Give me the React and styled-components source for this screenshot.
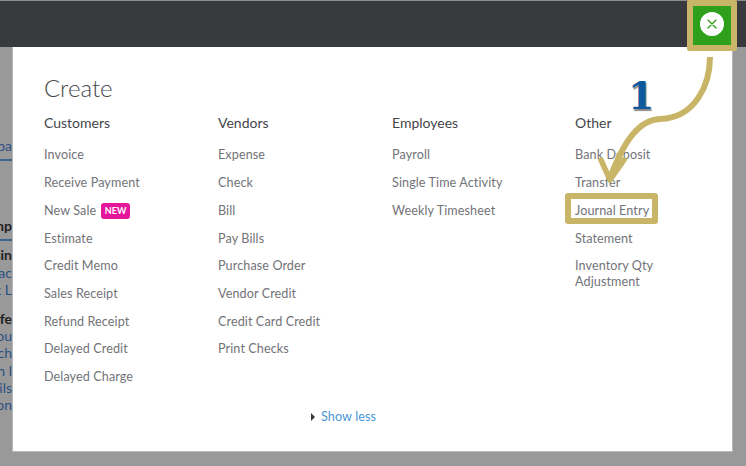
import styled, { createGlobalStyle } from "styled-components"

const GOLD = "#c9b568"

const Global = createGlobalStyle`
  html, body {
    margin: 0;
    padding: 0;
    background: #999999;
  }
  #root {
    width: 746px;
    height: 466px;
    overflow: hidden;
  }
`

const Page = styled.div`
  position: relative;
  width: 746px;
  height: 466px;
  display: flex;
  flex-direction: column;
  background: #999999;
  font-family: Lato, "Open Sans", sans-serif;
  overflow: hidden;
`

const TopBar = styled.div`
  height: 47px;
  flex: none;
  background: #393a3d;
  border-top: 1px solid #8d8d8d;
  box-sizing: border-box;
`

const Body = styled.div`
  display: flex;
  align-items: flex-start;
`

const Behind = styled.div`
  width: 12px;
  height: 405px;
  flex: none;
  overflow: hidden;
  font-size: 14px;
  line-height: 17.2px;
  color: #2d4f83;
  direction: rtl;
  white-space: nowrap;
`

const BehindGroup = styled.div`
  margin-top: ${(p) => p.$top}px;
`

const BehindTitle = styled.div`
  font-weight: 700;
  color: #222222;
`

const BehindLine = styled.div`
  height: 2px;
  margin-top: 5px;
  background: #3c648f;
`

const Modal = styled.div`
  width: 721px;
  height: 405px;
  flex: none;
  box-sizing: border-box;
  padding: 27px 0 0 31px;
  background: #ffffff;
  border-left: 1px solid #b5b8bd;
  border-right: 1px solid #b5b8bd;
  border-bottom: 1px solid #b5b8bd;
  display: flex;
  flex-direction: column;
`

const Title = styled.h1`
  margin: 0;
  font-size: 24px;
  line-height: 28px;
  font-weight: 300;
  color: #45464a;
`

const Columns = styled.div`
  display: flex;
  margin-top: 11px;
`

const Column = styled.div`
  width: ${(p) => p.$width}px;
  flex: none;
`

const Heading = styled.h2`
  margin: 0 0 8.6px;
  font-size: 14px;
  line-height: 20px;
  font-weight: 400;
  color: #45464a;
`

const Item = styled.div`
  display: flex;
  align-items: center;
  gap: 5px;
  padding: 5.85px 0;
  font-size: 12.6px;
  line-height: 16px;
  letter-spacing: 0.1px;
  color: #727378;
`

const NewTag = styled.span`
  padding: 0 3.5px;
  height: 16px;
  line-height: 16px;
  border-radius: 3px;
  background: #e5159c;
  color: #ffffff;
  font-size: 9px;
  font-weight: 700;
  letter-spacing: 0;
`

const ShowLess = styled.div`
  position: absolute;
  left: 311px;
  top: 408px;
  display: flex;
  align-items: center;
  gap: 6px;
  font-size: 12.6px;
  line-height: 16px;
  letter-spacing: 0.1px;
  color: #4a96d8;
  padding-top: 1px;
`

const Caret = styled.span`
  width: 0;
  height: 0;
  border-top: 4px solid transparent;
  border-bottom: 4px solid transparent;
  border-left: 4px solid #393a3d;
`

const CloseFrame = styled.div`
  position: absolute;
  left: 687px;
  top: 0;
  width: 50px;
  height: 51px;
  box-sizing: border-box;
  border: 6px solid ${GOLD};
  border-radius: 2px;
  background: #2ea01c;
  display: flex;
  align-items: center;
  justify-content: center;
`

const CloseCircle = styled.div`
  width: 24px;
  height: 24px;
  border-radius: 50%;
  background: #ffffff;
  display: flex;
  align-items: center;
  justify-content: center;
  margin-top: -3px;
`

const Highlight = styled.div`
  position: absolute;
  left: 565px;
  top: 193px;
  width: 93px;
  height: 31px;
  box-sizing: border-box;
  border: 6px solid ${GOLD};
  border-radius: 3px;
`

const StepNumber = styled.div`
  position: absolute;
  left: 628px;
  top: 74px;
  font-family: "DejaVu Serif", serif;
  font-weight: 700;
  font-size: 38px;
  line-height: 44px;
  color: #0f5a9e;
  text-shadow: 1px 2px 1px #8a8a8a;
`

const Arrow = styled.svg`
  position: absolute;
  left: 0;
  top: 0;
  pointer-events: none;
`

const columns = [
  {
    width: 174,
    title: "Customers",
    items: [
      "Invoice",
      "Receive Payment",
      "New Sale",
      "Estimate",
      "Credit Memo",
      "Sales Receipt",
      "Refund Receipt",
      "Delayed Credit",
      "Delayed Charge",
    ],
  },
  {
    width: 174,
    title: "Vendors",
    items: [
      "Expense",
      "Check",
      "Bill",
      "Pay Bills",
      "Purchase Order",
      "Vendor Credit",
      "Credit Card Credit",
      "Print Checks",
    ],
  },
  {
    width: 183,
    title: "Employees",
    items: ["Payroll", "Single Time Activity", "Weekly Timesheet"],
  },
  {
    width: 110,
    title: "Other",
    items: ["Bank Deposit", "Transfer", "Journal Entry", "Statement", "Inventory Qty Adjustment"],
  },
]

const App = () => {
  return (
    <Page>
      <Global />
      <TopBar />
      <Body>
        <Behind>
          <BehindGroup $top={90}>
            <div>pa</div>
            <BehindLine />
          </BehindGroup>
          <BehindGroup $top={56}>
            <BehindTitle>mp</BehindTitle>
            <BehindLine />
          </BehindGroup>
          <BehindGroup $top={5}>
            <BehindTitle>sin</BehindTitle>
            <div>tac</div>
            <div>k L</div>
          </BehindGroup>
          <BehindGroup $top={12}>
            <BehindTitle>fe</BehindTitle>
            <div>ou</div>
            <div>ch</div>
            <div>n l</div>
            <div>ails</div>
            <div>on</div>
          </BehindGroup>
        </Behind>
        <Modal>
          <Title>Create</Title>
          <Columns>
            {columns.map((col) => (
              <Column key={col.title} $width={col.width}>
                <Heading>{col.title}</Heading>
                {col.items.map((item) => (
                  <Item key={item}>
                    {item}
                    {item === "New Sale" && <NewTag>NEW</NewTag>}
                  </Item>
                ))}
              </Column>
            ))}
          </Columns>
        </Modal>
      </Body>
      <ShowLess>
        <Caret />
        Show less
      </ShowLess>
      <Highlight />
      <StepNumber>1</StepNumber>
      <Arrow width="746" height="466" viewBox="0 0 746 466" fill="none">
        <path
          d="M710 57C710 85 695 118 660 119C640 120 625 138 610 178"
          stroke={GOLD}
          strokeWidth="6"
        />
        <path
          d="M601 160L610 180L624 160"
          stroke={GOLD}
          strokeWidth="5.5"
          strokeLinecap="round"
          strokeLinejoin="round"
        />
      </Arrow>
      <CloseFrame>
        <CloseCircle>
          <svg width="12" height="12" viewBox="0 0 12 12" fill="none">
            <path d="M2 2L10 10M10 2L2 10" stroke="#2ea01c" strokeWidth="1.3" strokeLinecap="round" />
          </svg>
        </CloseCircle>
      </CloseFrame>
    </Page>
  )
}

export default App
